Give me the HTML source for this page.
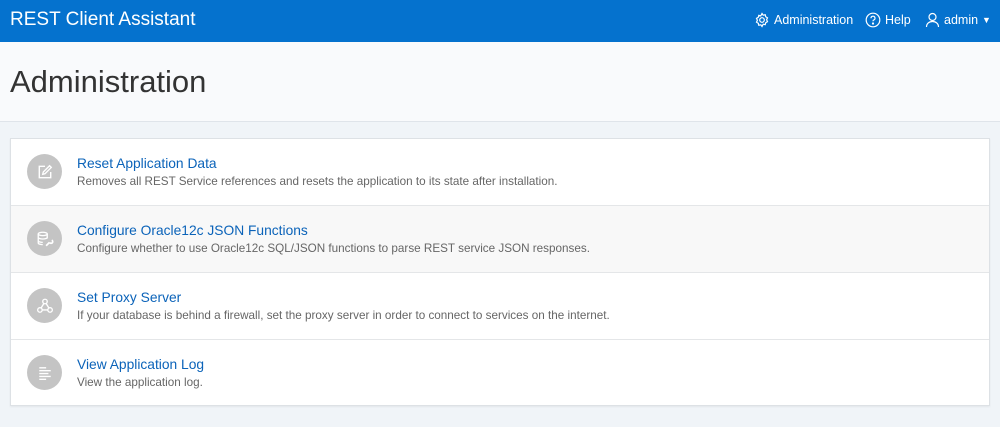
<!DOCTYPE html>
<html><head><style>
*{margin:0;padding:0;box-sizing:border-box}
body{width:1000px;height:427px;background:#f0f4f8;font-family:"Liberation Sans",sans-serif;overflow:hidden;position:relative}
.hd{height:42px;background:#0572ce;color:#fff;position:relative}
.hd .t{position:absolute;left:10px;top:9px;font-size:19px}
.nav{position:absolute;top:12px;font-size:12.5px;display:flex;align-items:center;gap:4px}
.ttl{height:80px;background:#f9fafc;border-bottom:1px solid #dfe4ea;position:relative}
.ttl h1{position:absolute;left:10px;top:22px;font-weight:normal;font-size:31px;color:#333}
.card{position:absolute;left:10px;top:138px;width:980px;height:268px;background:#fff;border:1px solid #dde1e5;box-shadow:0 1px 2px rgba(0,0,0,.06)}
.row{height:67px;border-bottom:1px solid #e4e6e8;position:relative}
.row:last-child{border-bottom:none}
.row.alt{background:#f8f8f8}
.ic{position:absolute;left:16px;top:15px;width:35px;height:35px;border-radius:50%;background:#c4c4c4;display:flex;align-items:center;justify-content:center}
.a{position:absolute;left:66px;top:17px;font-size:13.8px;color:#0b63b9}
.d{position:absolute;left:66px;top:36px;font-size:11.7px;color:#666}
</style></head><body>
<div class="hd"><div class="t">REST Client Assistant</div>
<div class="nav" style="left:754px"><svg width="16" height="16" viewBox="0 0 16 16" fill="none" stroke="#fff" stroke-width="1.2"><circle cx="8" cy="8" r="2.3"/><path d="M8 1.5l1.2 1.7 2-.5.5 2 1.8 1.1-.9 1.9.9 1.9-1.8 1.1-.5 2-2-.5L8 14.5l-1.2-1.7-2 .5-.5-2-1.8-1.1.9-1.9-.9-1.9 1.8-1.1.5-2 2 .5z"/></svg>Administration</div>
<div class="nav" style="left:865px"><svg width="16" height="16" viewBox="0 0 16 16" fill="none" stroke="#fff" stroke-width="1.2"><circle cx="8" cy="8" r="6.8"/><path d="M6 6.2a2 2 0 1 1 2.6 1.9c-.5.2-.6.6-.6 1.2"/><circle cx="8" cy="11.5" r=".5" fill="#fff"/></svg>Help</div>
<div class="nav" style="left:925px"><svg width="15" height="16" viewBox="0 0 15 16" fill="none" stroke="#fff" stroke-width="1.2"><circle cx="7.5" cy="5" r="3.5"/><path d="M1.5 15c0-3.5 2.7-5.5 6-5.5s6 2 6 5.5"/></svg>admin <span style="font-size:9px">▼</span></div>
</div>
<div class="ttl"><h1>Administration</h1></div>
<div class="card">
<div class="row"><div class="ic"><svg width="16" height="16" viewBox="0 0 14 14" fill="none" stroke="#fff" stroke-width="1.2"><path d="M7 2H2v10h10V7"/><path d="M5 9l.5-2L11 1.5l1.5 1.5L7 8.5z"/></svg></div><div class="a">Reset Application Data</div><div class="d">Removes all REST Service references and resets the application to its state after installation.</div></div>
<div class="row alt"><div class="ic"><svg width="18" height="18" viewBox="0 0 16 16" fill="none" stroke="#fff" stroke-width="1.2"><ellipse cx="6" cy="3.5" rx="4" ry="1.5"/><path d="M2 3.5v8c0 .8 1.8 1.5 4 1.5M10 3.5v4M2 6.5c0 .8 1.8 1.5 4 1.5s4-.7 4-1.5M2 9.5c0 .8 1.8 1.5 4 1.5"/><path d="M9 14l3-3m0 0a1.5 1.5 0 1 0 2-2" stroke-width="1.5"/></svg></div><div class="a">Configure Oracle12c JSON Functions</div><div class="d">Configure whether to use Oracle12c SQL/JSON functions to parse REST service JSON responses.</div></div>
<div class="row"><div class="ic"><svg width="18" height="18" viewBox="0 0 16 16" fill="none" stroke="#fff" stroke-width="1.2"><circle cx="8" cy="4" r="2"/><circle cx="3.5" cy="11.5" r="2"/><circle cx="12.5" cy="11.5" r="2"/><path d="M7 5.8L4.5 9.8M9 5.8l2.5 4M5.5 11.5h5"/></svg></div><div class="a">Set Proxy Server</div><div class="d">If your database is behind a firewall, set the proxy server in order to connect to services on the internet.</div></div>
<div class="row"><div class="ic"><svg width="16" height="16" viewBox="0 0 14 14" stroke="#fff" stroke-width="1.2"><path d="M2 2.5h6M2 5h10M2 7.5h8M2 10h10M2 12.5h6"/></svg></div><div class="a">View Application Log</div><div class="d">View the application log.</div></div>
</div>
</body></html>
